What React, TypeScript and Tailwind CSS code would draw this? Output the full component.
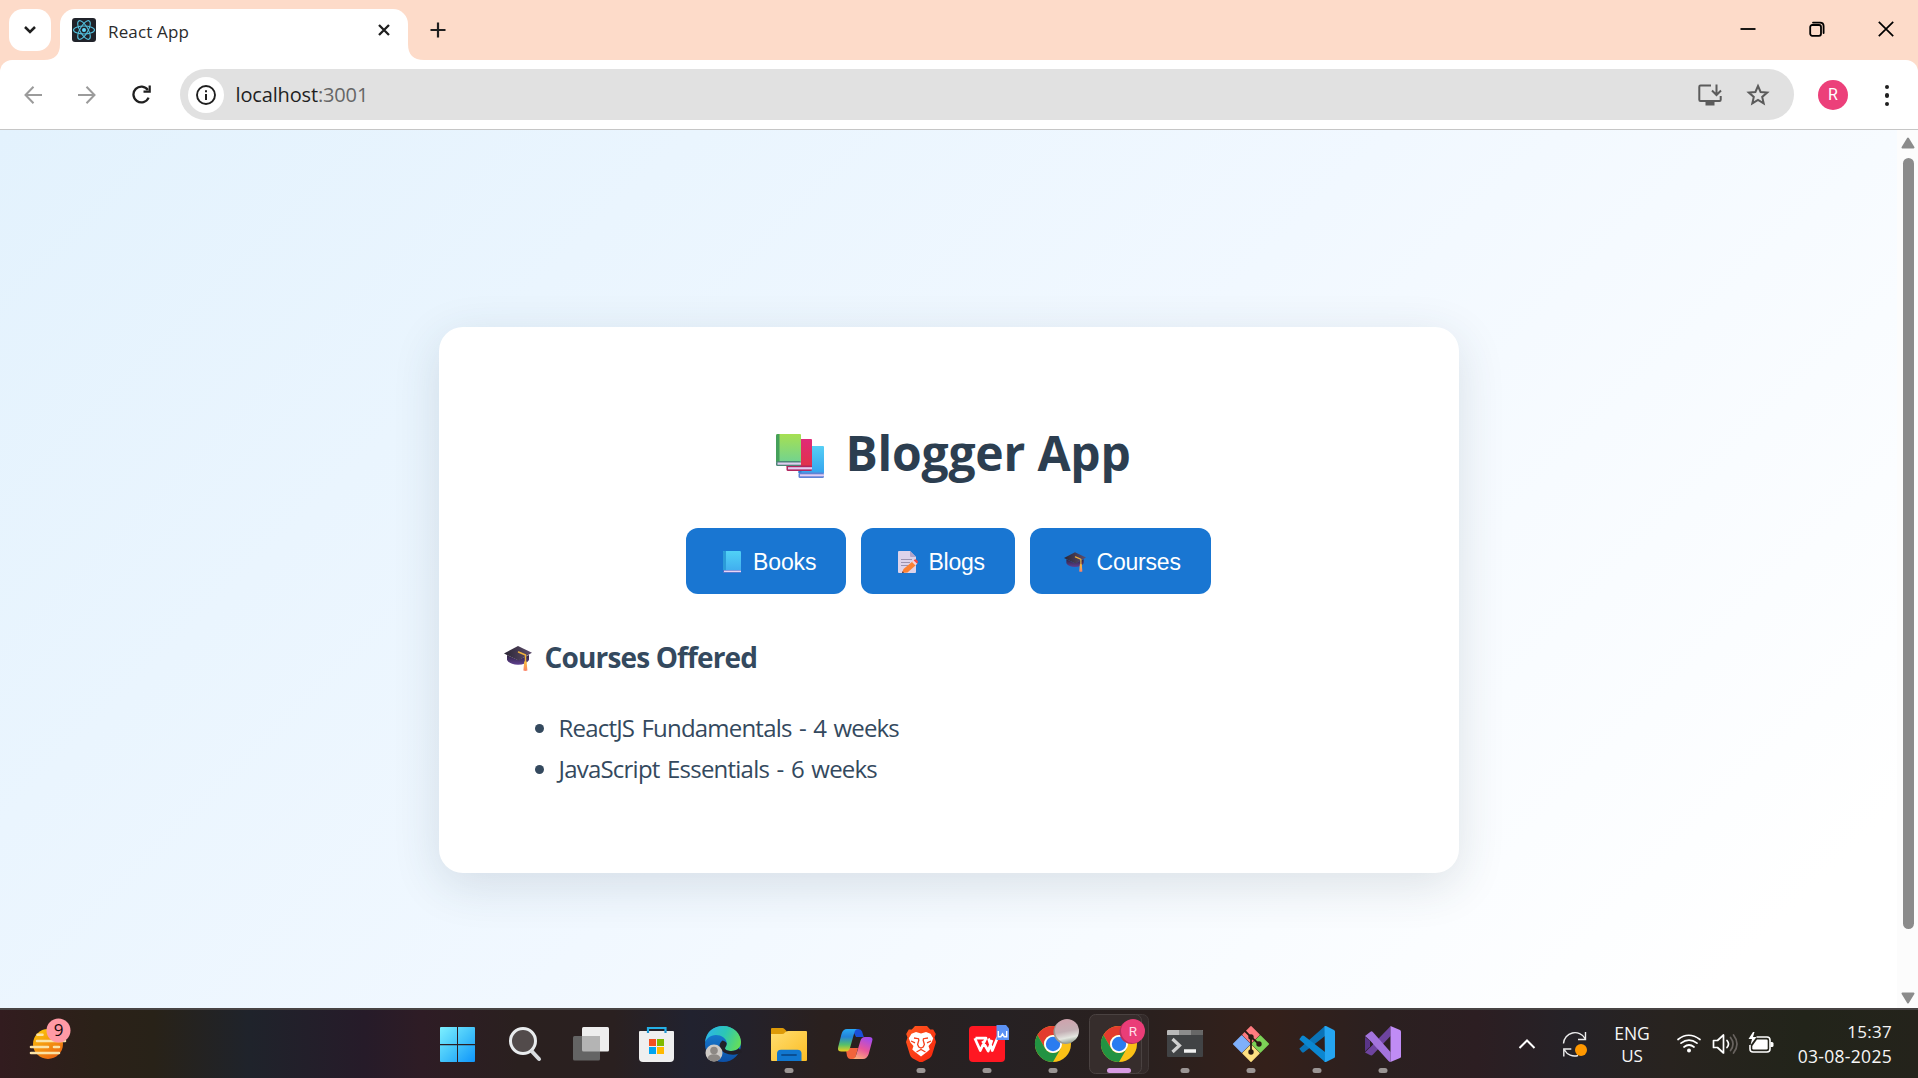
import React, { ReactNode } from 'react';

/* ---------- Page illustrations ---------- */

const BooksIcon = () => (
  <svg viewBox="0 0 48 44" className="h-[44px] w-[48px] shrink-0">
    <defs>
      <linearGradient id="bkG" x1="0" y1="0" x2="0" y2="1"><stop offset="0" stopColor="#a6e052" /><stop offset="1" stopColor="#72d38f" /></linearGradient>
      <linearGradient id="bkR" x1="0" y1="0" x2="0" y2="1"><stop offset="0" stopColor="#e02a78" /><stop offset="1" stopColor="#e13248" /></linearGradient>
      <linearGradient id="bkB" x1="0" y1="0" x2="0" y2="1"><stop offset="0" stopColor="#56cff5" /><stop offset="1" stopColor="#35a4ee" /></linearGradient>
    </defs>
    <path d="M24 12h23a1 1 0 0 1 1 1v26H22.500V14z" fill="url(#bkB)" />
    <path d="M22.500 32h3v7h-3z" fill="#2b7fd0" />
    <rect x="22.500" y="38.500" width="25.500" height="5.500" rx="1.500" fill="#5f83d6" />
    <rect x="24" y="40.300" width="24" height="2" fill="#e3cdf3" />
    <path d="M12 5h23a1 1 0 0 1 1 1v27H10.500V7z" fill="url(#bkR)" />
    <rect x="10.500" y="31.500" width="25.500" height="5.500" rx="1.500" fill="#b0255f" />
    <rect x="12" y="33.200" width="24" height="2.200" fill="#e3cdf3" />
    <path d="M1.500 0H24a1 1 0 0 1 1 1v27H0V1.500Q0 0 1.500 0z" fill="url(#bkG)" />
    <path d="M1.500 0H3.500v28H0V1.500Q0 0 1.500 0z" fill="#45a05a" />
    <rect x="0" y="27" width="25" height="5" rx="1.500" fill="#4d8577" />
    <rect x="1.500" y="28.500" width="23.500" height="2.200" fill="#e0cdf0" />
  </svg>
);

const BookIcon = () => (
  <svg viewBox="0 0 18 22" className="h-[22px] w-[18px] shrink-0">
    <defs><linearGradient id="bk1" x1="0" y1="0" x2="0" y2="1"><stop offset="0" stopColor="#50d2f6" /><stop offset="1" stopColor="#3fa9ee" /></linearGradient></defs>
    <rect width="18" height="22" rx="1.200" fill="url(#bk1)" />
    <path d="M1 0h2v19H0V1Q0 0 1 0z" fill="#2b9bd8" />
    <path d="M0 19h18v2q0 1-1 1H1q-1 0-1-1z" fill="#4a6fcb" />
    <path d="M1 19.600h17v1.500H1z" fill="#e8d5f5" />
  </svg>
);

const MemoIcon = () => (
  <svg viewBox="0 0 20 22" className="h-[22px] w-[20px] shrink-0">
    <path d="M1 0h11l6 6v15q0 1-1 1H1q-1 0-1-1V1q0-1 1-1z" fill="#ddd3ea" />
    <path d="M12 0l6 6h-5q-1 0-1-1z" fill="#b3a4c8" />
    <path d="M3 8.500h11M3 11.500h9M3 14.500h7" stroke="#9c93b0" strokeWidth="1" />
    <path d="M14.500 10.500l3.500 3.500-8.500 7.500-5.500.5 1.500-4z" fill="#fb8133" />
    <path d="M4 22l.6-1.800 1.400 1.500z" fill="#4a2d3a" />
    <path d="M14 11l2-1.800 3.400 3.300L17.500 14.500z" fill="#f5d3dc" />
    <path d="M15.700 9.400l1-.9q1-.6 2 .4l.8.900q.9 1 .1 1.900l-.7.700z" fill="#f3483f" />
  </svg>
);

const CapIcon = ({ className, id }: { className: string; id: string }) => (
  <svg viewBox="0 0 28 25" className={'shrink-0 ' + className}>
    <defs>
      <linearGradient id={id + 'a'} x1="0" y1="0" x2="1" y2="0"><stop offset="0" stopColor="#2a2533" /><stop offset="1" stopColor="#5f4e6e" /></linearGradient>
      <linearGradient id={id + 'b'} x1="0" y1="0" x2="0" y2="1"><stop offset="0" stopColor="#2f2340" /><stop offset="1" stopColor="#5f4090" /></linearGradient>
      <linearGradient id={id + 'c'} x1="0" y1="0" x2="0" y2="1"><stop offset="0" stopColor="#f9c13c" /><stop offset="1" stopColor="#fb8268" /></linearGradient>
    </defs>
    <path d="M3 9l11 5 11-5v5q-3 4.800-11 4.800T3 14z" fill={`url(#${id}b)`} />
    <path d="M14 0l14 6.800L14.500 14.500 0 7.500z" fill={`url(#${id}a)`} />
    <path d="M14.500 6l7 3v8" fill="none" stroke="#f0b23c" strokeWidth="1.500" strokeLinejoin="round" strokeLinecap="round" />
    <path d="M20.200 15.500h2.400l.8 9q-2 .8-4 0z" fill={`url(#${id}c)`} />
  </svg>
);

/* ---------- Browser chrome ---------- */

const ReactLogo = () => (
  <svg viewBox="0 0 24 24" className="h-6 w-6">
    <rect width="24" height="24" rx="3" fill="#20232a" />
    <g fill="none" stroke="#53c1de" strokeWidth="1.100">
      <ellipse cx="12" cy="12" rx="10.500" ry="4" />
      <ellipse cx="12" cy="12" rx="10.500" ry="4" transform="rotate(60 12 12)" />
      <ellipse cx="12" cy="12" rx="10.500" ry="4" transform="rotate(120 12 12)" />
    </g>
    <circle cx="12" cy="12" r="2" fill="#61dafb" />
  </svg>
);

const TabStrip = () => (
  <div className="flex h-[60px] shrink-0 items-start bg-[#fddbc9]">
    <div className="ml-[9px] mt-[9px] flex h-[42px] w-[42px] items-center justify-center rounded-[14px] bg-white">
      <svg viewBox="0 0 14 10" className="h-[10px] w-[14px]"><path d="M2 2l5 5 5-5" fill="none" stroke="#1f1f1f" strokeWidth="2.500" /></svg>
    </div>
    <svg viewBox="0 0 16 16" className="-ml-[7px] h-4 w-4 self-end"><path d="M0 16h16V0q0 16-16 16z" fill="#fff" /></svg>
    <div className="mt-[9px] flex h-[51px] w-[348px] rounded-t-[15px] bg-white pl-[12px] pt-[9px]">
      <ReactLogo />
      <span className="ml-[12px] mt-px h-6 w-[120px] whitespace-nowrap text-[17px] leading-[25px] tracking-[0.15px] text-[#2b2b2b]">React App</span>
      <svg viewBox="0 0 12 12" className="ml-[150px] mt-[6px] h-3 w-3"><path d="M1 1l10 10M11 1L1 11" stroke="#1f1f1f" strokeWidth="2.300" /></svg>
    </div>
    <svg viewBox="0 0 16 16" className="h-4 w-4 self-end"><path d="M0 0v16h16Q0 16 0 0z" fill="#fff" /></svg>
    <svg viewBox="0 0 16 16" className="ml-[6px] mt-[22px] h-4 w-4"><path d="M8 .5v15M.5 8h15" stroke="#1f1f1f" strokeWidth="2.200" /></svg>
    <div className="ml-auto mr-[24.500px] mt-[21px] flex items-center gap-[53px]">
      <svg viewBox="0 0 16 16" className="h-4 w-4"><path d="M.5 8h15" stroke="#000" strokeWidth="1.800" /></svg>
      <svg viewBox="0 0 16 16" className="h-4 w-4">
        <rect x="1.200" y="4" width="10.800" height="10.800" rx="2" fill="none" stroke="#000" strokeWidth="1.800" />
        <path d="M4 1.600h7Q14.600 1.600 14.600 5v7" fill="none" stroke="#000" strokeWidth="1.800" strokeLinecap="round" />
      </svg>
      <svg viewBox="0 0 16 16" className="h-4 w-4"><path d="M.8 .8l14.400 14.400M15.200 .8L.8 15.200" stroke="#000" strokeWidth="1.700" /></svg>
    </div>
  </div>
);

const Toolbar = () => (
  <div className="h-[70px] shrink-0 bg-[#fddbc9]">
    <div className="flex h-[70px] items-start rounded-t-[12px] border-b border-[#c6c6c6] bg-white pt-[9px]">
      <div className="flex h-[51px] w-[180px] shrink-0 items-center pl-[24px]">
        <svg viewBox="0 0 18 18" className="h-[18px] w-[18px]"><path d="M9.500 .8L1.500 9l8 8.200M1.500 9H18" fill="none" stroke="#9b9b9b" strokeWidth="2" /></svg>
        <svg viewBox="0 0 18 18" className="ml-[36px] h-[18px] w-[18px]"><path d="M8.500 .8L16.500 9l-8 8.200M16.500 9H0" fill="none" stroke="#9b9b9b" strokeWidth="2" /></svg>
        <svg viewBox="0 0 20 20" className="ml-[35.500px] h-5 w-5">
          <path d="M16.600 12.600A7.900 7.900 0 1 1 15.900 5" fill="none" stroke="#1f1f1f" strokeWidth="2.300" />
          <path d="M11.500 7.700h7.300V.5h-2.200v5h-5.100z" fill="#1f1f1f" />
        </svg>
      </div>
      <div className="flex h-[51px] w-[1614px] shrink-0 items-center rounded-full bg-[#e1e1e1] pl-[8px]">
        <div className="flex h-9 w-9 items-center justify-center rounded-full bg-white">
          <svg viewBox="0 0 20 20" className="h-5 w-5"><circle cx="10" cy="10" r="9" fill="none" stroke="#1f1f1f" strokeWidth="1.900" /><path d="M10 9v6M10 5.200v2" stroke="#1f1f1f" strokeWidth="2" /></svg>
        </div>
        <span className="ml-[11.500px] text-[20px] leading-[51px] tracking-[-0.15px] text-[#1f1f1f]">localhost<span className="text-[#666]">:3001</span></span>
        <svg viewBox="0 0 24 22" className="ml-auto h-[22px] w-[24px]">
          <path d="M13 1.600H2.500q-1.200 0-1.200 1.200v13q0 1.200 1.200 1.200h19q1.200 0 1.200-1.200V12" fill="none" stroke="#5b5b5b" strokeWidth="2" />
          <path d="M7.500 17h9v4.500h-9z" fill="#5b5b5b" />
          <path d="M18.500 .5v10M14 6.500l4.500 4.500L23 6.500" fill="none" stroke="#5b5b5b" strokeWidth="2" />
        </svg>
        <svg viewBox="0 0 24 24" className="ml-[24px] mr-[24px] h-6 w-6"><path d="M12 3l2.600 6 6.600.6-5 4.300 1.500 6.500-5.700-3.400-5.700 3.400 1.500-6.500-5-4.300 6.600-.6z" fill="none" stroke="#5b5b5b" strokeWidth="2" /></svg>
      </div>
      <div className="ml-[24px] mt-[11px] flex h-[30px] w-[30px] items-center justify-center rounded-full bg-[#ec407a] font-['Roboto',sans-serif] text-[16px] leading-[30px] text-white">R</div>
      <div className="ml-[36.500px] mt-[15.500px] flex flex-col items-center gap-[4px]">
        <i className="h-[4.500px] w-[4.500px] rounded-full bg-[#1f1f1f]" /><i className="h-[4.500px] w-[4.500px] rounded-full bg-[#1f1f1f]" /><i className="h-[4.500px] w-[4.500px] rounded-full bg-[#1f1f1f]" />
      </div>
    </div>
  </div>
);

/* ---------- Blogger page ---------- */

const NavButton = ({ className, children }: { className: string; children: ReactNode }) => (
  <button className={"flex h-[66px] items-center rounded-[12px] bg-[#1976d2] pt-px font-['Liberation_Sans',Arial,sans-serif] text-[23px] leading-[30px] text-white " + className}>{children}</button>
);

const Page = () => (
  <div className="flex h-[878px] shrink-0 bg-[linear-gradient(135deg,#e3f2fd_0%,#f1f8ff_50%,#ffffff_92%)]">
    <main className="flex w-[1897px] justify-center pt-[197px]">
      <section className="h-[546px] w-[1020px] rounded-[24px] bg-white px-[65px] pt-[95px] shadow-[0_12px_48px_rgba(44,62,80,0.14)]">
        <div className="flex h-[60px] pl-[272px]">
          <span className="mt-[12px]"><BooksIcon /></span>
          <h1 className="ml-[22px] mt-px whitespace-nowrap text-[48px] font-bold leading-[60px] tracking-[-0.2px] text-[#2c3e50]">Blogger App</h1>
        </div>
        <nav className="mt-[46px] flex gap-[15px] pl-[182px]">
          <NavButton className="w-[160px] pl-[37px]"><BookIcon /><span className="ml-[12.500px] tracking-[-0.1px]">Books</span></NavButton>
          <NavButton className="w-[154px] pl-[37px]"><MemoIcon /><span className="ml-[11px] tracking-[-0.25px]">Blogs</span></NavButton>
          <NavButton className="w-[181px] pl-[34px]"><CapIcon id="capN" className="h-[20px] w-[22px]" /><span className="ml-[11px] tracking-[-0.2px]">Courses</span></NavButton>
        </nav>
        <div className="mt-[42px] flex h-[40px]">
          <CapIcon id="capH" className="mt-[10px] h-[25px] w-[28px]" />
          <h2 className="ml-[13px] mt-px whitespace-nowrap text-[28px] font-bold leading-[40px] tracking-[-0.85px] text-[#34495e]">Courses Offered</h2>
        </div>
        <ul className="mt-[31px] pl-[31px] text-[24px] leading-[41px] text-[#34495e]">
          <li className="flex items-center"><i className="mr-[15px] mt-[2px] h-[9px] w-[9px] rounded-full bg-[#34495e]" /><span className="tracking-[-0.8px] [word-spacing:1.900px]">ReactJS Fundamentals - 4 weeks</span></li>
          <li className="flex items-center"><i className="mr-[15px] mt-[2px] h-[9px] w-[9px] rounded-full bg-[#34495e]" /><span className="tracking-[-0.78px] [word-spacing:2px]">JavaScript Essentials - 6 weeks</span></li>
        </ul>
      </section>
    </main>
    <div className="flex w-[21px] flex-col items-center bg-[#fcfcfc] pl-px pt-[7px]">
      <svg viewBox="0 0 14 12" className="h-3 w-[14px]"><path d="M7 1.500L12.500 10.500H1.500z" fill="#8b8b8b" stroke="#8b8b8b" strokeWidth="2" strokeLinejoin="round" /></svg>
      <div className="mt-[9px] h-[771px] w-[11px] rounded-full bg-[#8b8b8b]" />
      <svg viewBox="0 0 14 12" className="mt-[63px] h-3 w-[14px]"><path d="M7 10.500L12.500 1.500H1.500z" fill="#8b8b8b" stroke="#8b8b8b" strokeWidth="2" strokeLinejoin="round" /></svg>
    </div>
  </div>
);

/* ---------- Taskbar ---------- */

const Cell = ({ children, run, active }: { children: ReactNode; run?: boolean; active?: boolean }) => (
  <svg viewBox="0 0 66 68" className="h-[68px] w-[66px] shrink-0 overflow-visible">
    {active && <rect x="40" y="4.500" width="22.500" height="59" rx="6" fill="#332a29" stroke="#403837" />}
    {active && <rect x="3.500" y="4.500" width="52" height="59" rx="6" fill="#362d2c" stroke="#4a4241" />}
    {children}
    {run && <rect x="28.500" y="58" width="9" height="5" rx="2.500" fill="#9b9594" />}
    {active && <rect x="21" y="58" width="24" height="5" rx="2.500" fill="#d89be3" />}
  </svg>
);

const Chrome = () => (
  <g>
    <circle cx="33" cy="34" r="18" fill="#fbc116" />
    <path d="M17.400 25A18 18 0 0 1 48.600 25H33a9 9 0 0 0-7.800 13.500z" fill="#e33b2e" />
    <path d="M17.400 25A18 18 0 0 0 33 52l7.800-13.500a9 9 0 0 1-15.600 0z" fill="#229342" />
    <circle cx="33" cy="34" r="9" fill="#fff" />
    <circle cx="33" cy="34" r="7.200" fill="#2a7cf0" />
  </g>
);

const TaskIcons = () => (
  <div className="flex">
    <Cell>
      <defs><linearGradient id="win" x1="14" y1="17" x2="49" y2="52" gradientUnits="userSpaceOnUse"><stop stopColor="#7df0ff" /><stop offset=".5" stopColor="#45c5fa" /><stop offset="1" stopColor="#0f95fb" /></linearGradient></defs>
      <path d="M15 17h16v17H14V18q0-1 1-1zM32 17h16q1 0 1 1v16H32zM14 35.200h17V52H15q-1 0-1-1zM32 35.200h17V51q0 1-1 1H32z" fill="url(#win)" />
    </Cell>
    <Cell>
      <circle cx="31" cy="31" r="12.500" fill="#524b4b" stroke="#e9ecee" strokeWidth="3" />
      <path d="M40 41.500l7 7.500" stroke="#d9dde0" strokeWidth="4" strokeLinecap="round" />
    </Cell>
    <Cell>
      <rect x="24" y="17" width="27" height="24.500" rx="1.500" fill="#eee" />
      <rect x="15" y="26" width="27" height="24.500" rx="1.500" fill="#646464" />
      <path d="M24 26h18v15.500H25.500q-1.500 0-1.500-1.500z" fill="#b4b4b4" />
    </Cell>
    <Cell>
      <path d="M24 24v-6h17.500v6" fill="none" stroke="#24b0e6" strokeWidth="2.200" />
      <path d="M16 21h33q1 0 1 1v26q0 4-4 4H19q-4 0-4-4V22q0-1 1-1z" fill="#efefef" />
      <path d="M24 21v2M41.500 21v2" stroke="#1e93cf" strokeWidth="2.200" />
      <path d="M25 29h7v7h-7z" fill="#f25022" /><path d="M33 29h7v7h-7z" fill="#7fba00" /><path d="M25 37h7v7h-7z" fill="#00a4ef" /><path d="M33 37h7v7h-7z" fill="#ffb900" />
    </Cell>
    <Cell>
      <defs>
        <linearGradient id="edgeA" x1="15" y1="20" x2="51" y2="36" gradientUnits="userSpaceOnUse"><stop stopColor="#2cb5ec" /><stop offset=".5" stopColor="#2cc6b5" /><stop offset="1" stopColor="#6be04f" /></linearGradient>
        <linearGradient id="edgeB" x1="0" y1="0" x2="0" y2="1"><stop stopColor="#1a86d8" /><stop offset="1" stopColor="#0c4fa6" /></linearGradient>
      </defs>
      <circle cx="33" cy="34" r="18" fill="url(#edgeB)" />
      <path d="M15 33C16 21 24 16 33 16c11 0 18 8 18 16 0 5.500-4 9-9.500 9-4 0-6.500-1.300-6.500-2.800 0-1.200 1.700-1.700 1.700-4.700C36.700 28 31 25 26 25c-6 0-10 4-11 8z" fill="url(#edgeA)" />
      <path d="M35 38.200c0 1.500 2.500 2.800 6.500 2.800 3 0 5.500-1 7.200-2.800L52 42l-4.200 2C42 46 31 44 29.500 36c0-2 1-4 3-5.500 2 .5 4 1.500 4.200 3-.1 3-1.700 3.500-1.700 4.700z" fill="#211f27" />
      <circle cx="24" cy="43" r="8.500" fill="#cfcbc6" /><circle cx="24" cy="40.500" r="3.800" fill="#8d8884" /><path d="M17.500 48.500q1-4.200 6.500-4.200t6.500 4.200a8.500 8.500 0 0 1-13 0z" fill="#8d8884" />
    </Cell>
    <Cell run>
      <defs><linearGradient id="fold" x1="0" y1="0" x2="1" y2="1"><stop stopColor="#ffdd70" /><stop offset="1" stopColor="#fbbd24" /></linearGradient></defs>
      <path d="M16 18h10.500q1 0 2 1l2 2v7H15v-9q0-1 1-1z" fill="#dd9a08" />
      <path d="M15 24h11q2 0 3-1.500t3-1.500h18q1 0 1 1v28q0 1-1 1H16q-1 0-1-1z" fill="url(#fold)" />
      <path d="M21 51V43.500Q21 39.700 25 39.700H41.500q4 0 4 3.800V51z" fill="#1177cf" /><path d="M26 45h14" stroke="#0a4f93" strokeWidth="1.800" strokeLinecap="round" />
    </Cell>
    <Cell>
      <defs>
        <linearGradient id="cpA" x1="0" y1="0" x2="0" y2="1"><stop stopColor="#28a8f5" /><stop offset=".35" stopColor="#2384d8" /><stop offset=".7" stopColor="#56c06a" /><stop offset="1" stopColor="#f0cf1d" /></linearGradient>
        <linearGradient id="cpB" x1=".6" y1="0" x2=".2" y2="1"><stop stopColor="#a64bea" /><stop offset=".5" stopColor="#e8569c" /><stop offset="1" stopColor="#fdb07a" /></linearGradient>
      </defs>
      <path d="M24 40l4-2h8l-3 11h-4.500Q26 49 25 46z" fill="#f2643c" />
      <path d="M30 19h6.500q2.600 0 3.500 2.500l1.800 5.500H34z" fill="#1b4fd8" />
      <path d="M25 19h11q-2.500 0-3.500 3l-4.500 16q-1 3.500-4.500 3.500h-4Q15 41.500 16.200 37l3.300-13Q21 19 25 19z" fill="url(#cpA)" />
      <path d="M41 49H30q3 0 4-3.500l4.500-15q1-3.500 4.500-3.500h4Q51.500 27 50.200 31l-3.500 13Q45 49 41 49z" fill="url(#cpB)" />
    </Cell>
    <Cell run>
      <defs><linearGradient id="brv" x1="0" y1="0" x2="1" y2="1"><stop stopColor="#ff5a20" /><stop offset="1" stopColor="#f8230c" /></linearGradient></defs>
      <path d="M27 16h12l3.200 3.600 3-.2L47.800 24l-1.300 3.500L48 32l-4 13q-.6 2-2.500 3.200L34.500 52h-3l-7-3.800Q22.600 47 22 45l-4-13 1.500-4.500L18.200 24l2.600-4.600 3 .2z" fill="url(#brv)" />
      <path d="M33 23.500l5-1.500 4.500 1.800 2.700 4.400-1.500 4-3.200 3.800 1.200 3.500-2.200 2-6.500 5-6.500-5-2.200-2 1.200-3.500-3.200-3.800-1.500-4 2.700-4.400L28 22z" fill="#fff" />
      <path d="M26 28l4.500.7.300 1.500-1.200 4.300 1.200 2.500L33 38l2.200-1 1.200-2.500-1.200-4.300.3-1.500L40 28M23 31l4 1.800M43 31l-4 1.800M28.500 42l4.500-2.500 4.500 2.500" fill="none" stroke="#f5401c" strokeWidth="1.300" />
    </Cell>
    <Cell run>
      <rect x="15" y="16" width="36" height="36" rx="4" fill="#ff1722" />
      <path d="M21.500 28.200H32L26.300 40.500 20.800 28.200M28.500 31l5.700 10L38 30M34.500 28.500L38.300 40.500 43.800 27" fill="none" stroke="#fff" strokeWidth="2.700" strokeLinejoin="round" />
      <path d="M42.500 15h9.500l3 3.500V30H42.500z" fill="#5c92f4" />
      <path d="M44.300 21v5.700h2.500l1.700-2.800 1.700 2.800h2.500V21" fill="none" stroke="#fff" strokeWidth="1.400" />
    </Cell>
    <Cell run>
      <defs><linearGradient id="ava" x1=".4" y1="0" x2=".6" y2="1"><stop stopColor="#cfa3ad" /><stop offset=".5" stopColor="#c4b0b5" /><stop offset=".78" stopColor="#e4e6e0" /><stop offset="1" stopColor="#8f9d8e" /></linearGradient></defs>
      <Chrome /><circle cx="45.500" cy="22" r="12" fill="#9b9a94" /><circle cx="47" cy="21" r="12" fill="url(#ava)" />
    </Cell>
    <Cell active>
      <Chrome /><circle cx="45.500" cy="22" r="12" fill="#b72e5c" /><circle cx="47" cy="21" r="12" fill="#ea3d78" />
      <text x="47" y="26" textAnchor="middle" fontFamily="Roboto, sans-serif" fontSize="13.500" fill="#ffdce8">R</text>
    </Cell>
    <Cell run>
      <path d="M16 20h34q1 0 1 1v4H15v-4q0-1 1-1z" fill="#b9b9b9" /><path d="M27 20h12v5H27z" fill="#8c8c8c" /><path d="M39 20h11q1 0 1 1v4H39z" fill="#676767" />
      <path d="M15 25h36v21q0 1-1 1H16q-1 0-1-1z" fill="#414345" />
      <path d="M20.500 29l7 6.500-7 6.500" fill="none" stroke="#cfcfcf" strokeWidth="3.200" /><path d="M32 41h12" stroke="#f2f2f2" strokeWidth="3.500" />
    </Cell>
    <Cell run>
      <g strokeLinejoin="round" strokeWidth="1.500">
        <path d="M33 16.800l8 8-8 8-8-8z" fill="#ff7b7f" stroke="#ff7b7f" /><path d="M23.700 26l8 8-8 8-8-8z" fill="#7fb0fb" stroke="#7fb0fb" />
        <path d="M42.300 26l8 8-8 8-8-8z" fill="#7cd257" stroke="#7cd257" /><path d="M33 35.200l8 8-8 8-8-8z" fill="#fde082" stroke="#fde082" />
      </g>
      <path d="M26.500 20.500l6.500 6.500v15M33 27l8 7" fill="none" stroke="#2a1a14" strokeWidth="1.800" />
      <circle cx="33" cy="27" r="2.700" fill="#2a1a14" /><circle cx="41" cy="34" r="2.700" fill="#2a1a14" /><circle cx="33" cy="42" r="2.700" fill="#2a1a14" />
    </Cell>
    <Cell run>
      <path d="M15.500 39l2.300 3q1.200 1 2.500 0L41 26V16L16 38q-1 .8-.5 1z" fill="#0a73b7" />
      <path d="M15.500 29l2.300-3q1.200-1 2.500 0L41 42v10L16 30q-1-.8-.5-1z" fill="#0b87d1" />
      <path d="M40.500 16.300q.8-.6 1.500-.2l8 3.900q1 .6 1 1.600v24.800q0 1-1 1.600l-8 3.900q-.7.400-1.500-.2l.5-1z" fill="#25a5f1" />
    </Cell>
    <Cell run>
      <path d="M15 42.500L40.500 16.200V26L23 44.500q-1.500 1.500-3 .5z" fill="#6e449f" />
      <path d="M15 27v14.500l5-5V31z" fill="#5a3588" />
      <path d="M15 26l5.500-4.300q1.200-.8 2.300.3L40.500 42v10q-1 0-2-1L20 30.500z" fill="#a374dc" />
      <path d="M20 31v6.500l3-3z" fill="#2a2022" />
      <path d="M40.500 16l9.500 4q1 .6 1 1.600v24.800q0 1-1 1.600l-9.500 4z" fill="#c08cf5" />
    </Cell>
  </div>
);

const Weather = () => (
  <div className="flex w-[426px] shrink-0">
    <svg viewBox="0 0 100 68" className="h-[68px] w-[100px]">
      <defs><linearGradient id="sun" x1="0" y1="0" x2=".6" y2="1"><stop stopColor="#fdce0a" /><stop offset="1" stopColor="#ec6a12" /></linearGradient></defs>
      <circle cx="48" cy="34" r="15" fill="url(#sun)" />
      <path d="M37.500 24.800h5M37 31h28M31 37h17M54 37h5M31 43h28" stroke="#fbe3a6" strokeWidth="2.600" strokeLinecap="round" />
      <circle cx="58.500" cy="20.500" r="12" fill="#ff9aa5" />
      <text x="58.500" y="26" textAnchor="middle" fontFamily="'Open Sans', sans-serif" fontSize="17" fill="#16090b">9</text>
    </svg>
  </div>
);

const Tray = () => (
  <div className="ml-auto flex text-[17px] leading-[22px] text-[#f6f6f6]">
    <svg viewBox="0 0 90 68" className="h-[68px] w-[90px]">
      <g transform="translate(2 0)">
        <path d="M9.500 38l7.500-7.500 7.500 7.500" fill="none" stroke="#fff" strokeWidth="2" />
        <path d="M53.500 33.500A11.500 11.500 0 0 1 75 28.500M75.500 22v7.500H68" fill="none" stroke="#eee" strokeWidth="1.400" />
        <path d="M54.500 40A11.500 11.500 0 0 0 68 45.500M53.800 46.500V39h7.500" fill="none" stroke="#eee" strokeWidth="1.400" />
        <circle cx="71" cy="40" r="6" fill="#ff9800" />
      </g>
    </svg>
    <div className="flex w-[68px] flex-col items-center pt-[12px]"><span className="text-[17.500px]">ENG</span><span className="mt-px">US</span></div>
    <svg viewBox="0 0 110 68" className="h-[68px] w-[110px]">
      <g fill="none" stroke="#fff" strokeWidth="1.700" strokeLinecap="round">
        <path d="M12 29.500q10.500-8.500 22 0M15 33.200q8-6.200 16 0M18 37q5-4 10 0" />
        <path d="M47.500 30.500h4l6-5.500v18l-6-5.500h-4z" strokeLinejoin="round" />
        <path d="M61 30.500q3 3.500 0 7" />
        <path d="M64.500 27.500q5 6.500 0 13M67.500 25q7 9 0 18" stroke="#68635f" />
      </g>
      <circle cx="23" cy="40.500" r="2" fill="#fff" />
      <path d="M90.500 27h10.500q3 0 3 3v9q0 3-3 3H87q-3 0-3-3v-4" fill="none" stroke="#fff" strokeWidth="1.600" />
      <path d="M91 29.500h9.500q1.200 0 1.200 1.200v7.600q0 1.200-1.200 1.200H87.500q-1.200 0-1.200-1.200V36z" fill="#fff" />
      <path d="M104.500 32h1.500q1.500 0 1.500 1.500v2q0 1.500-1.500 1.500H104.500z" fill="#fff" />
      <path d="M87 22l-4.500 7H86L84.500 35l6-8H87l1.500-5z" fill="#fff" />
    </svg>
    <div className="flex w-[116px] flex-col items-end pt-[10px] tracking-[0.3px]"><span className="mt-px">15:37</span><span className="mt-[2px] text-[17.500px]">03-08-2025</span></div>
    <div className="w-[26px]" />
  </div>
);

export default function App() {
  return (
    <div className="flex h-[1078px] w-[1918px] flex-col overflow-hidden bg-white font-['Open_Sans','Noto_Sans',sans-serif]">
      <TabStrip />
      <Toolbar />
      <Page />
      <footer className="flex h-[70px] shrink-0 border-t-2 border-[#484444] bg-[linear-gradient(90deg,#321c1f_0%,#2b2118_5%,#282218_8%,#1f232b_13%,#261b29_19%,#2e1c25_22%,#2a201f_27%,#2a2020_32%,#21222f_36%,#24212a_39%,#2a201e_43%,#262123_52%,#2a201e_60%,#34201a_66%,#2b2020_72%,#2c1e22_77%,#252227_82%,#28231f_87%,#22241a_94%,#24231b_100%)] bg-origin-border">
        <Weather />
        <TaskIcons />
        <Tray />
      </footer>
    </div>
  );
}
